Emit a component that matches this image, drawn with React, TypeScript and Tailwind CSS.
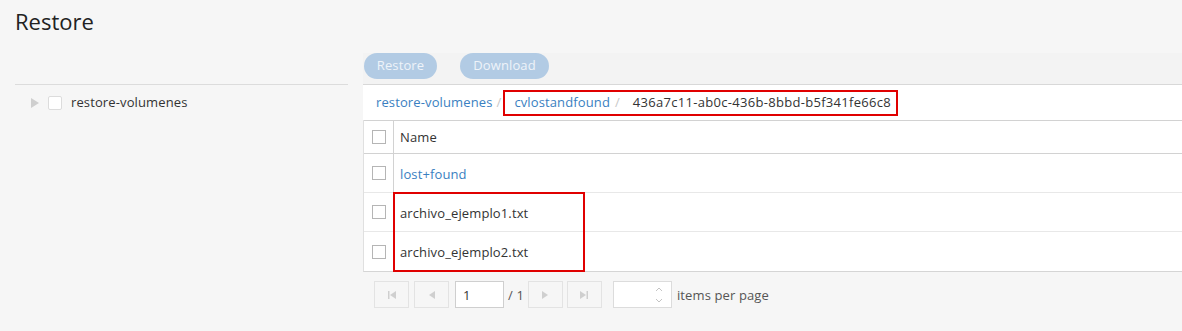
import React from "react";

const font = { fontFamily: '"Open Sans", "Noto Sans", sans-serif' };

function Box({ className = "" }: { className?: string }) {
  return <span className={`inline-block w-[14px] h-[14px] border border-[#b5b5b5] bg-white ${className}`} />;
}

function PagerBtn({ children }: { children: React.ReactNode }) {
  return (
    <div className="w-[35px] h-[27px] border border-[#e3e3e3] flex items-center justify-center text-[#cfcfcf]">
      {children}
    </div>
  );
}

export default function App() {
  return (
    <div className="min-h-[331px] bg-[#f6f6f6] text-[#333] text-[13px] tracking-[0.12px] overflow-hidden" style={font}>
      <h1 className="pl-[15px] pt-[6px] text-[22px] leading-[30px] text-[#222] tracking-normal">Restore</h1>
      <div className="flex mt-[17px]">
        {/* left */}
        <div className="ml-[15px] w-[333px] pt-[31px] shrink-0">
          <div className="border-t border-[#dcdcdc] flex items-center h-[36px] pl-[15px]">
            <svg width="10" height="12" viewBox="0 0 10 12" className="mr-[8px]">
              <path d="M1 1 L9 6 L1 11 Z" fill="#cfcfcf" />
            </svg>
            <span className="inline-block w-[14px] h-[14px] border border-[#dcdcdc] rounded-[2px] bg-white mr-[9px]" />
            <span className="pt-[1px]">restore-volumenes</span>
          </div>
        </div>
        {/* right */}
        <div className="ml-[15px] flex-1 min-w-0">
          <div className="h-[32px] bg-[#f3f3f3] border-b border-[#d8d8d8] flex items-start pl-[1px] gap-[23px]">
            <button className="h-[26px] w-[73px] rounded-full bg-[#b2cbe4] text-[#eef3f9] text-[13px]">Restore</button>
            <button className="h-[26px] w-[89px] rounded-full bg-[#b2cbe4] text-[#eef3f9] text-[13px]">Download</button>
          </div>
          <div className="bg-white h-[35px] flex items-center pl-[13px]">
            <span className="text-[#3a7fc1] pt-[1px]">restore-volumenes</span>
            <span className="text-[#c8c8c8] ml-[4px] pt-[1px]">/</span>
            <div className="ml-[2px] h-[26px] border-2 border-[#e00000] flex items-center pl-[9px] pr-[5px]">
              <span className="text-[#3a7fc1] pt-[1px]">cvlostandfound</span>
              <span className="text-[#c8c8c8] ml-[5px] pt-[1px]">/</span>
              <span className="ml-[13px] tracking-[0.3px] pt-[1px]">436a7c11-ab0c-436b-8bbd-b5f341fe66c8</span>
            </div>
          </div>
          <div className="relative bg-white border-l border-[#e0e0e0] border-b border-b-[#d5d5d5]">
            <div className="flex h-[34px] border-t border-b border-[#d2d2d2]">
              <div className="w-[30px] flex items-center pl-[8px] border-r border-[#d2d2d2]">
                <Box />
              </div>
              <div className="flex items-center pl-[6px] pt-[2px]">Name</div>
            </div>
            {[
              { name: "lost+found", link: true },
              { name: "archivo_ejemplo1.txt" },
              { name: "archivo_ejemplo2.txt" },
            ].map((r, i) => (
              <div key={i} className={`flex h-[39px] ${i < 2 ? "border-b border-[#e8e8e8]" : ""}`}>
                <div className="w-[30px] flex items-center pl-[8px] border-r border-[#d2d2d2]">
                  <Box />
                </div>
                <div className={`flex items-center pl-[6px] pt-[3px] ${r.link ? "text-[#3a7fc1]" : ""}`}>{r.name}</div>
              </div>
            ))}
            <div className="absolute left-[29px] top-[72px] w-[192px] h-[80px] border-2 border-[#e00000] pointer-events-none" />
          </div>
          <div className="flex items-center pl-[11px] mt-[9px] h-[27px]">
            <PagerBtn>
              <svg width="10" height="10" viewBox="0 0 10 10">
                <rect x="1" y="1" width="1.5" height="8" fill="#cfcfcf" />
                <path d="M9 1 L3 5 L9 9 Z" fill="#cfcfcf" />
              </svg>
            </PagerBtn>
            <div className="ml-[5px]">
              <PagerBtn>
                <svg width="8" height="10" viewBox="0 0 8 10">
                  <path d="M7 1 L1 5 L7 9 Z" fill="#cfcfcf" />
                </svg>
              </PagerBtn>
            </div>
            <div className="ml-[6px] w-[49px] h-[27px] border border-[#cfcfcf] bg-white flex items-center pl-[7px] pt-[2px]">1</div>
            <span className="ml-[4px] text-[#555] pt-[2px]">/ 1</span>
            <div className="ml-[4px]">
              <PagerBtn>
                <svg width="8" height="10" viewBox="0 0 8 10">
                  <path d="M1 1 L7 5 L1 9 Z" fill="#cfcfcf" />
                </svg>
              </PagerBtn>
            </div>
            <div className="ml-[4px]">
              <PagerBtn>
                <svg width="10" height="10" viewBox="0 0 10 10">
                  <path d="M1 1 L7 5 L1 9 Z" fill="#cfcfcf" />
                  <rect x="7.5" y="1" width="1.5" height="8" fill="#cfcfcf" />
                </svg>
              </PagerBtn>
            </div>
            <div className="ml-[11px] w-[59px] h-[27px] border border-[#dcdcdc] bg-white flex items-center justify-end pr-[8px]">
              <svg width="8" height="18" viewBox="0 0 8 18">
                <path d="M1 5 L4 2 L7 5" stroke="#c4c4c4" fill="none" strokeWidth="1" />
                <path d="M1 13 L4 16 L7 13" stroke="#c4c4c4" fill="none" strokeWidth="1" />
              </svg>
            </div>
            <span className="ml-[5px] text-[#555] pt-[2px]">items per page</span>
          </div>
        </div>
      </div>
    </div>
  );
}
